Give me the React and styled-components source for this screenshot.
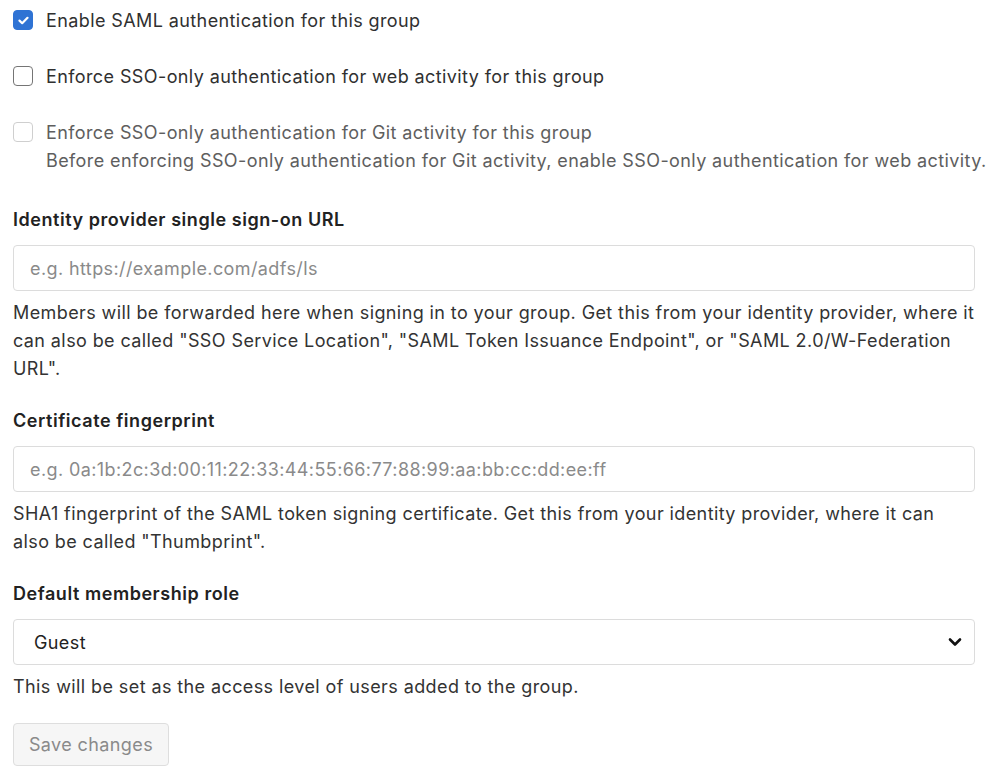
import React from 'react';
import styled, { createGlobalStyle } from 'styled-components';

const GlobalStyle = createGlobalStyle`
  body {
    margin: 0;
    background: #fff;
    font-family: Inter, "Liberation Sans", Arial, sans-serif;
    color: #303030;
    letter-spacing: 0.4px;
  }
`;

const Form = styled.form`
  padding: 7px 0 12px 13px;
`;

const CheckRow = styled.label`
  display: flex;
  align-items: flex-start;
  gap: 13px;
  margin-bottom: ${(p) => p.$gap || 28}px;
  font-size: 18px;
  line-height: 28px;
  white-space: nowrap;
  color: ${(p) => (p.$disabled ? '#5e5e5e' : '#303030')};
`;

const Box = styled.span`
  flex: none;
  width: 20px;
  height: 20px;
  margin-top: 3px;
  border-radius: 4px;
  box-sizing: border-box;
  border: 1px solid ${(p) => (p.$checked ? '#2f73d4' : p.$disabled ? '#cfcfcf' : '#757575')};
  background: ${(p) => (p.$checked ? '#2f73d4' : '#fff')};
  display: flex;
  align-items: center;
  justify-content: center;
`;

const CheckText = styled.div`
  display: flex;
  flex-direction: column;
`;

const Field = styled.div`
  width: 962px;
  margin-bottom: 24px;
`;

const Label = styled.div`
  font-size: 18px;
  line-height: 28px;
  font-weight: 600;
  letter-spacing: 0.55px;
  color: #222;
  margin-bottom: 11px;
`;

const Input = styled.input`
  display: block;
  width: 100%;
  height: 46px;
  box-sizing: border-box;
  border: 1px solid #dcdcdc;
  border-radius: 4px;
  padding: 0 16px;
  font-family: inherit;
  font-size: 18px;
  letter-spacing: 0.4px;
  color: #303030;
  &::placeholder {
    color: #8a8a8a;
  }
`;

const SelectBox = styled.div`
  width: 100%;
  height: 46px;
  box-sizing: border-box;
  border: 1px solid #dcdcdc;
  border-radius: 4px;
  padding: 0 12px 0 20px;
  display: flex;
  align-items: center;
  justify-content: space-between;
  font-size: 18px;
  color: #222;
`;

const Help = styled.p`
  margin: 8px 0 0;
  font-size: 18px;
  line-height: 28px;
  color: #333;
`;

const Button = styled.button`
  margin-top: -2px;
  width: 156px;
  height: 43px;
  box-sizing: border-box;
  border: 1px solid #dedede;
  border-radius: 4px;
  background: #f6f6f6;
  color: #8a8a8a;
  font-family: inherit;
  font-size: 18px;
  letter-spacing: 0.4px;
`;

const Check = () => (
  <svg width="11" height="9" viewBox="0 0 11 9">
    <path d="M1.5 4.6 L4.2 7.2 L9.5 1.8" fill="none" stroke="#fff" strokeWidth="2.2" strokeLinecap="round" strokeLinejoin="round" />
  </svg>
);

const Chevron = () => (
  <svg width="14" height="10" viewBox="0 0 14 10">
    <path d="M2 2.5 L7 7.5 L12 2.5" fill="none" stroke="#111" strokeWidth="2.6" strokeLinecap="round" strokeLinejoin="round" />
  </svg>
);

export default function App() {
  return (
    <>
      <GlobalStyle />
      <Form>
        <CheckRow>
          <Box $checked><Check /></Box>
          <CheckText>Enable SAML authentication for this group</CheckText>
        </CheckRow>
        <CheckRow>
          <Box />
          <CheckText>Enforce SSO-only authentication for web activity for this group</CheckText>
        </CheckRow>
        <CheckRow $disabled $gap={31}>
          <Box $disabled />
          <CheckText>
            <span>Enforce SSO-only authentication for Git activity for this group</span>
            <span>Before enforcing SSO-only authentication for Git activity, enable SSO-only authentication for web activity.</span>
          </CheckText>
        </CheckRow>

        <Field>
          <Label>Identity provider single sign-on URL</Label>
          <Input placeholder="e.g. https://example.com/adfs/ls" />
          <Help>
            Members will be forwarded here when signing in to your group. Get this from your identity provider, where it
            can also be called "SSO Service Location", "SAML Token Issuance Endpoint", or "SAML 2.0/W-Federation
            URL".
          </Help>
        </Field>

        <Field>
          <Label>Certificate fingerprint</Label>
          <Input placeholder="e.g. 0a:1b:2c:3d:00:11:22:33:44:55:66:77:88:99:aa:bb:cc:dd:ee:ff" />
          <Help>
            SHA1 fingerprint of the SAML token signing certificate. Get this from your identity provider, where it can
            also be called "Thumbprint".
          </Help>
        </Field>

        <Field>
          <Label>Default membership role</Label>
          <SelectBox>
            <span>Guest</span>
            <Chevron />
          </SelectBox>
          <Help>This will be set as the access level of users added to the group.</Help>
        </Field>

        <Button type="button" disabled>Save changes</Button>
      </Form>
    </>
  );
}
